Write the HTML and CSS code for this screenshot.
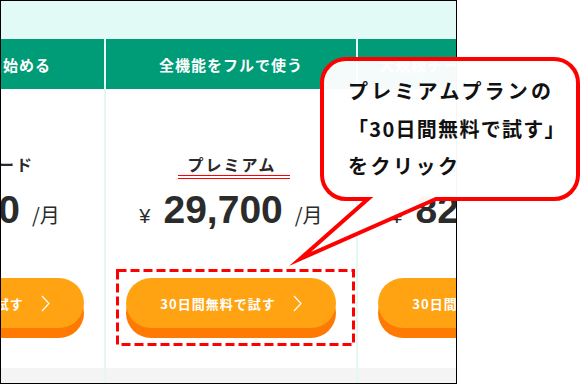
FILE: index.html
```html
<!DOCTYPE html>
<html lang="ja">
<head>
<meta charset="utf-8">
<title>料金プラン</title>
<link rel="stylesheet" href="styles.css">
</head>
<body>
<div class="frame">
  <div class="band"></div>
  <div class="cols">
    <div class="col">
      <div class="col-head">まずは気軽に始める</div>
      <div class="col-body">
        <div class="plan">スタンダード</div>
        <div class="rule"></div>
        <div class="price"><span class="yen">¥</span><span class="num">9,900</span><span class="per">/月</span></div>
        <div class="btn"><span class="btn-text">30日間無料で試す</span><svg class="chev" width="9" height="17" viewBox="0 0 9 17"><polyline points="1,1 8,8.5 1,16" fill="none" stroke="#fff" stroke-width="1.2"/></svg></div>
      </div>
      <div class="col-foot"></div>
    </div>
    <div class="col">
      <div class="col-head">全機能をフルで使う</div>
      <div class="col-body">
        <div class="plan">プレミアム</div>
        <div class="rule red"></div>
        <div class="price"><span class="yen">¥</span><span class="num">29,700</span><span class="per">/月</span></div>
        <div class="btn"><span class="btn-text">30日間無料で試す</span><svg class="chev" width="9" height="17" viewBox="0 0 9 17"><polyline points="1,1 8,8.5 1,16" fill="none" stroke="#fff" stroke-width="1.2"/></svg></div>
      </div>
      <div class="col-foot"></div>
    </div>
    <div class="col">
      <div class="col-head">大規模チームで本格的に使う</div>
      <div class="col-body">
        <div class="plan">ビジネス</div>
        <div class="rule"></div>
        <div class="price"><span class="yen">¥</span><span class="num">82,500</span><span class="per">/月</span></div>
        <div class="btn"><span class="btn-text">30日間無料で試す</span><svg class="chev" width="9" height="17" viewBox="0 0 9 17"><polyline points="1,1 8,8.5 1,16" fill="none" stroke="#fff" stroke-width="1.2"/></svg></div>
      </div>
      <div class="col-foot"></div>
    </div>
  </div>
</div>

<svg class="marks" width="584" height="385" viewBox="0 0 584 385">
  <rect x="117.5" y="270.5" width="236" height="74" fill="none" stroke="#ff0000" stroke-width="3" stroke-dasharray="9 4"/>
  <path d="M346 59 H554 A24 24 0 0 1 578 83 V175 A24 24 0 0 1 554 199 H436 L300 259 L368 199 H346 A24 24 0 0 1 322 175 V83 A24 24 0 0 1 346 59 Z" fill="rgba(255,255,255,0.96)" stroke="#ff0000" stroke-width="4" stroke-miterlimit="8" stroke-linejoin="miter"/>
</svg>
<div class="note">
  <div class="note-l1">プレミアムプランの</div>
  <div class="note-l2">「30日間無料で試す」</div>
  <div class="note-l3">をクリック</div>
</div>
</body>
</html>
```

FILE: styles.css
```css
html, body {
  margin: 0;
  padding: 0;
  background: #ffffff;
}
body {
  width: 584px;
  height: 385px;
  position: relative;
  overflow: hidden;
  font-family: "Noto Sans CJK JP", "Noto Sans", sans-serif;
}
.frame {
  width: 455px;
  height: 382px;
  border: 1px solid #000;
  overflow: hidden;
  display: flex;
  flex-direction: column;
  background: #fff;
}
.band {
  height: 38px;
  flex: none;
  background: #e2faf5;
}
.cols {
  flex: 1;
  display: flex;
  gap: 2px;
  margin-left: -147px;
  background: #e4f8f2;
}
.col {
  width: 250px;
  flex: none;
  display: flex;
  flex-direction: column;
  background: #fff;
}
.col-head {
  height: 50px;
  background: #009b77;
  color: #fff;
  font-size: 15px;
  font-weight: 700;
  letter-spacing: 1px;
  display: flex;
  align-items: center;
  justify-content: center;
  white-space: nowrap;
}
.col-body {
  flex: 1;
  display: flex;
  flex-direction: column;
  padding-top: 65px;
}
.col-foot {
  height: 15px;
  background: #f4f4f4;
}
.plan {
  font-size: 16px;
  line-height: 20px;
  font-weight: 700;
  letter-spacing: 2px;
  color: #2a2a2a;
  text-align: center;
  padding-left: 2px;
}
.rule {
  width: 112px;
  height: 4px;
  box-sizing: border-box;
  margin: 1px 0 0 72px;
  border-top: 1px solid transparent;
  border-bottom: 1px solid transparent;
}
.rule.red {
  border-color: #ff0000;
}
.price {
  margin-top: 11px;
  display: flex;
  align-items: baseline;
  justify-content: center;
  color: #2b2b2b;
}
.yen {
  font-family: "Liberation Sans", sans-serif;
  font-size: 20px;
  line-height: 1;
  margin-right: 13px;
}
.num {
  font-family: "Liberation Sans", sans-serif;
  font-weight: 700;
  font-size: 39px;
  line-height: 1;
  margin-right: 12px;
}
.per {
  font-size: 20px;
  line-height: 1;
}
.btn {
  width: 210px;
  height: 50px;
  margin: 49px auto 0;
  border-radius: 25px;
  background: #ffa313;
  box-shadow: 0 10px 0 #ff7a02;
  display: flex;
  align-items: center;
  justify-content: center;
  gap: 17px;
  color: #fff;
}
.btn-text {
  font-size: 13px;
  font-weight: 700;
  letter-spacing: 1px;
  white-space: nowrap;
}
.chev {
  display: block;
  flex: none;
}
.marks {
  position: absolute;
  left: 0;
  top: 0;
}
.note {
  position: absolute;
  left: 348px;
  top: 72px;
  font-size: 20px;
  line-height: 37.5px;
  font-weight: 700;
  color: #111;
  white-space: nowrap;
}
.note-l1 {
  letter-spacing: 3.2px;
}
.note-l2 {
  letter-spacing: 1.3px;
}
.note-l3 {
  letter-spacing: 2.5px;
}
```
